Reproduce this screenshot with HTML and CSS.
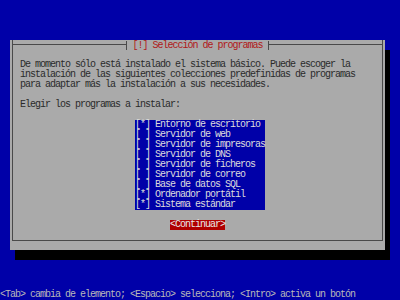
FILE: index.html
```html
<!DOCTYPE html>
<html lang="es">
<head>
<meta charset="UTF-8" />
<title>Selección de programas</title>
<link rel="stylesheet" href="styles.css">
</head>
<body>

<div class="screen">
  <div class="dialog">
    <div class="frame">
      <div class="title-row">
        <span class="rule"></span>
        <span class="title"> [!] Selección de programas </span>
        <span class="rule"></span>
      </div>

      <p class="intro">De momento sólo está instalado el sistema básico. Puede escoger la
instalación de las siguientes colecciones predefinidas de programas
para adaptar más la instalación a sus necesidades.</p>

      <p class="prompt">Elegir los programas a instalar:</p>

      <ul class="choices">
        <li>[*] Entorno de escritorio</li>
        <li>[ ] Servidor de web</li>
        <li>[ ] Servidor de impresoras</li>
        <li>[ ] Servidor de DNS</li>
        <li>[ ] Servidor de ficheros</li>
        <li>[ ] Servidor de correo</li>
        <li>[ ] Base de datos SQL</li>
        <li>[*] Ordenador portátil</li>
        <li>[*] Sistema estándar</li>
      </ul>

      <div class="actions">
        <span class="button">&lt;Continuar&gt;</span>
      </div>
    </div>
  </div>

  <div class="help">&lt;Tab&gt; cambia de elemento; &lt;Espacio&gt; selecciona; &lt;Intro&gt; activa un botón</div>
</div>

</body>
</html>
```

FILE: styles.css
```css
html, body {
  margin: 0;
  padding: 0;
}
body {
  background: #0000a8;
  width: 400px;
  height: 300px;
  overflow: hidden;
  font-family: "Liberation Mono", "DejaVu Sans Mono", monospace;
  font-size: 10px;
  line-height: 10px;
  letter-spacing: -1px;
}
.screen {
  padding-top: 40px;
}
.dialog {
  margin-left: 10px;
  width: 375px;
  height: 210px;
  box-sizing: border-box;
  padding: 4px 2px 5px 2px;
  background: #aaaaaa;
  color: #2a2a2a;
  box-shadow: 5px 10px 0 #000;
}
.frame {
  height: 100%;
  box-sizing: border-box;
  border: 1px solid #4a4a4a;
  border-top: none;
}
.title-row {
  display: flex;
  height: 10px;
  margin: -4px -1px 0 -1px;
}
.rule {
  flex: 1;
  background: linear-gradient(#4a4a4a, #4a4a4a) no-repeat 0 4px / 100% 1px;
}
.title {
  white-space: pre;
  color: #b01818;
  border-left: 1px solid #4a4a4a;
  border-right: 1px solid #4a4a4a;
  margin-top: 1px;
  line-height: 9px;
}
.intro,
.prompt {
  white-space: pre;
  margin: 10px 0 0 0;
  padding-left: 7px;
}
.choices {
  list-style: none;
  margin: 10px 0 0 122px;
  padding: 0;
  width: 130px;
  background: #0000a8;
  color: #dcdcdc;
}
.choices li {
  white-space: pre;
}
.actions {
  margin-top: 10px;
  text-align: center;
}
.button {
  display: inline-block;
  white-space: pre;
  background: #b00000;
  color: #e8e8e8;
}
.help {
  white-space: pre;
  margin-top: 40px;
  color: #b8b8b8;
}
```
